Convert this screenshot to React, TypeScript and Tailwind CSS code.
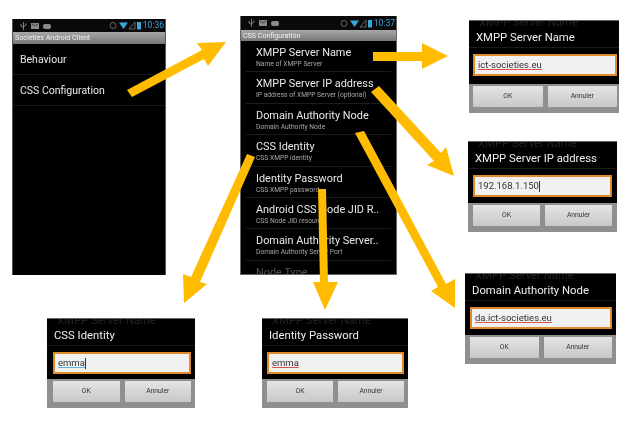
import React from "react";

const font = { fontFamily: "Roboto, sans-serif" };

function StatusBar({ time, h }: { time: string; h: string }) {
  return (
    <div className={`${h} bg-[#0a0a0a] flex items-center justify-between pl-[7px] pr-[1px] shrink-0`}>
      <svg width="34" height="8" viewBox="0 0 34 8" fill="#8a8a8a">
        <path d="M3.5 0v8M1 2v2l2.5 1.5M6 1.5v1.5L3.5 4.5" stroke="#8a8a8a" strokeWidth="0.9" fill="none" />
        <rect x="11" y="1" width="8" height="6" />
        <path d="M12 2l3 2 3-2" stroke="#222" strokeWidth="0.7" fill="none" />
        <rect x="23" y="2" width="8" height="5" rx="2" />
      </svg>
      <div className="flex items-center gap-[2px]">
        <svg width="32" height="9" viewBox="0 0 32 9">
          <circle cx="4" cy="4.5" r="3" fill="none" stroke="#666" strokeWidth="1" />
          <path d="M10 1.5h9l-4.5 6.5z" fill="#3aa7dc" />
          <path d="M20 8l6-7v7z" fill="none" stroke="#777" strokeWidth="0.8" />
          <rect x="28" y="1" width="4" height="7.5" fill="#3aa7dc" />
        </svg>
        <span className="text-[8.5px] leading-none text-[#3aa7dc]">{time}</span>
      </div>
    </div>
  );
}

function TitleBar({ text, h }: { text: string; h: string }) {
  return (
    <div className={`${h} bg-gradient-to-b from-[#a8a8a8] to-[#777777] flex items-center pl-[2px] text-[7.1px] leading-none text-[#f2f2f2] shrink-0`}>
      {text}
    </div>
  );
}

function Pref({ title, sub, dim }: { title: string; sub: string; dim?: boolean }) {
  return (
    <div className="h-[31.4px] shrink-0 border-b border-[#1c1c1c] mx-[5px] pl-[10px] pt-[5px]">
      <div className={`text-[10.9px] leading-[14px] whitespace-nowrap ${dim ? "text-[#555]" : "text-[#e8e8e8]"}`}>{title}</div>
      <div className="text-[6.7px] leading-[9px] text-[#a8a8a8] whitespace-nowrap">{sub}</div>
    </div>
  );
}

function Dialog({
  x, y, w, h, px, title, value, spell, caret,
}: {
  x: string; y: string; w: string; h: string; px: string; title: string; value: string; spell?: string; caret?: boolean;
}) {
  return (
    <div className={`absolute ${x} ${y} ${w} ${h} flex flex-col bg-black border-t border-[#666] blur-[0.4px]`} style={font}>
      <div className="relative h-[27px] shrink-0 pl-[7px] pt-[10px] text-[11.3px] leading-[14px] text-[#f0f0f0] whitespace-nowrap border-b border-[#1a1a1a]">
        <div className="absolute left-[10px] top-0 h-[7px] overflow-hidden text-[#222]">
          <div className="-mt-[5px]">XMPP Server Name</div>
        </div>
        <span>{title}</span>
      </div>
      <div className={`flex-1 ${px} pt-[6px]`}>
        <div className="h-[22px] bg-[#f1f1f1] border-2 border-[#e08a2c] flex items-center pl-[3px] text-[9.5px] text-[#333]">
          <span className={spell}>{value}</span>
          {caret && <span className="w-px h-[11px] bg-[#333]" />}
        </div>
      </div>
      <div className={`h-[29px] shrink-0 bg-[#8f8f8f] flex gap-[5px] ${px} pt-[2px] pb-[6px]`}>
        <div className="flex-1 bg-gradient-to-b from-[#e4e4e4] to-[#c8c8c8] flex items-center justify-center text-[6.8px] text-[#333]">OK</div>
        <div className="flex-1 bg-gradient-to-b from-[#e4e4e4] to-[#c8c8c8] flex items-center justify-center text-[6.8px] text-[#333]">Annuler</div>
      </div>
    </div>
  );
}

const red = "underline decoration-[#d9534f] decoration-1 underline-offset-1";
const blue = "underline decoration-[#5bb8dc] decoration-1 underline-offset-1";

export default function App() {
  return (
    <div className="relative w-[637px] h-[423px] bg-white overflow-hidden" style={font}>
      <div className="absolute left-[12px] top-[19px] w-[154px] h-[256px] bg-black flex flex-col border-x border-[#555] blur-[0.4px]">
        <StatusBar time="10:36" h="h-[13px]" />
        <TitleBar text="Societies Android Client" h="h-[12px]" />
        <div className="h-[31px] border-b border-[#181818] flex items-center pl-[7px] pt-[2px] text-[10.5px] text-[#e8e8e8]">Behaviour</div>
        <div className="h-[31px] border-b border-[#181818] flex items-center pl-[7px] pt-[2px] text-[10.5px] text-[#e8e8e8]">CSS Configuration</div>
      </div>

      <div className="absolute left-[240px] top-[16px] w-[157px] h-[259px] bg-black flex flex-col border-x border-b border-[#666] overflow-hidden blur-[0.4px]">
        <StatusBar time="10:37" h="h-[14px]" />
        <TitleBar text="CSS Configuration" h="h-[11px]" />
        <Pref title="XMPP Server Name" sub="Name of XMPP Server" />
        <Pref title="XMPP Server IP address" sub="IP address of XMPP Server (optional)" />
        <Pref title="Domain Authority Node" sub="Domain Authority Node" />
        <Pref title="CSS Identity" sub="CSS XMPP identity" />
        <Pref title="Identity Password" sub="CSS XMPP password" />
        <Pref title="Android CSS Node JID R.." sub="CSS Node JID resource" />
        <Pref title="Domain Authority Server.." sub="Domain Authority Server Port" />
        <Pref title="Node Type" sub="" dim />
      </div>

      <Dialog x="left-[469px]" y="top-[20px]" w="w-[150px]" h="h-[93px]" px="pl-[4px] pr-[2px]" title="XMPP Server Name" value="ict-societies.eu" spell={red} />
      <Dialog x="left-[468px]" y="top-[141px]" w="w-[149px]" h="h-[91px]" px="pl-[5px] pr-[5px]" title="XMPP Server IP address" value="192.168.1.150" caret />
      <Dialog x="left-[465px]" y="top-[273px]" w="w-[151px]" h="h-[91px]" px="pl-[5px] pr-[4px]" title="Domain Authority Node" value="da.ict-societies.eu" spell={red} />
      <Dialog x="left-[47px]" y="top-[318px]" w="w-[148px]" h="h-[90px]" px="pl-[6px] pr-[4px]" title="CSS Identity" value="emma" spell={blue} caret />
      <Dialog x="left-[262px]" y="top-[318px]" w="w-[146px]" h="h-[90px]" px="pl-[5px] pr-[4px]" title="Identity Password" value="emma" spell={red} />

      <svg className="absolute inset-0" width="637" height="423" viewBox="0 0 637 423" fill="#ffbb00">
        <polygon points="127,90 202,50 197,43 226,42 208,66 204,59 132,97" />
        <polygon points="373,52 422,52 422,43 448,56 422,69 422,61 373,61" />
        <polygon points="371,92 379,86 441,153 446,147 454,176 427,165 434,161" />
        <polygon points="355,133 364,131 446,284 455,279 455,308 431,291 438,287" />
        <polygon points="247,154 255,157 200,282 207,284 184,303 183,274 191,277" />
        <polygon points="318,189 326,189 328,282 338,282 325,310 313,282 320,282" />
      </svg>
    </div>
  );
}
